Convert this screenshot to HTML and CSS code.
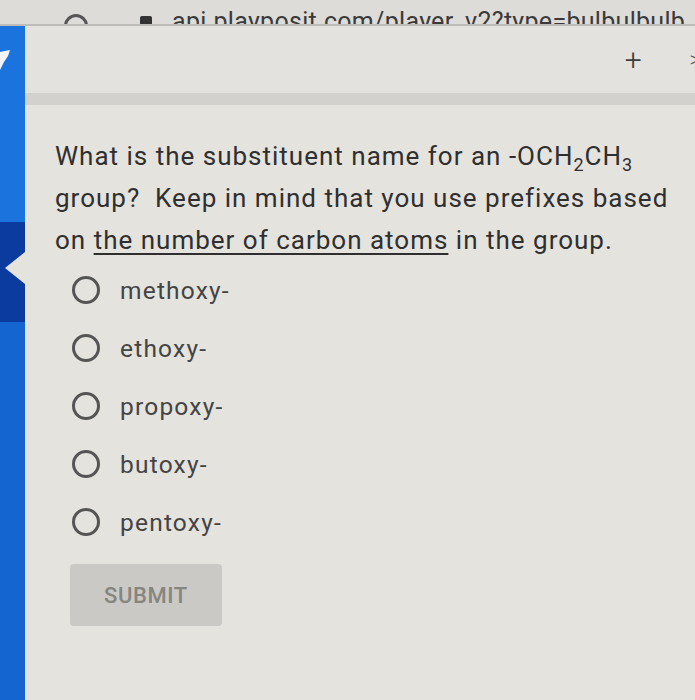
FILE: index.html
```html
<!DOCTYPE html>
<html lang="en">
<head>
    <meta charset="UTF-8">
    <title>PlayPosit question</title>
    <link rel="stylesheet" href="styles.css">
</head>
<body>
    <!-- browser address bar, cut off by the photo -->
    <div class="urlbar">
        <span class="reload"></span>
        <span class="lock"></span>
        <span class="url">api.playposit.com/player_v2?type=bulbulbulb</span>
    </div>

    <div class="app">
        <div class="rail">
            <div class="rail-top">
                <svg class="logo" width="12" height="24" viewBox="0 0 12 24">
                    <path d="M0 4 L10 2 L8 8 L4 14 L0 22 Z" fill="#f2f4f8"/>
                </svg>
            </div>
            <div class="rail-mark"></div>
            <div class="rail-bottom"></div>
        </div>

        <div class="main">
            <div class="topbar">
                <span class="plus">+</span>
                <span class="next">&gt;</span>
            </div>
            <div class="strip"></div>

            <div class="content">
                <p class="question">
                    What is the substituent name for an -OCH<sub>2</sub>CH<sub>3</sub><br>
                    group?&nbsp; Keep in mind that you use prefixes based<br>
                    on <u>the number of carbon atoms</u> in the group.
                </p>

                <div class="options">
                    <label class="option"><span class="radio"></span>methoxy-</label>
                    <label class="option"><span class="radio"></span>ethoxy-</label>
                    <label class="option"><span class="radio"></span>propoxy-</label>
                    <label class="option"><span class="radio"></span>butoxy-</label>
                    <label class="option"><span class="radio"></span>pentoxy-</label>
                </div>

                <button class="submit-btn" disabled>SUBMIT</button>
            </div>
        </div>
    </div>
</body>
</html>
```

FILE: styles.css
```css
body {
    margin: 0;
    width: 695px;
    height: 700px;
    overflow: hidden;
    font-family: Roboto, "Noto Sans", sans-serif;
    background-color: #e5e3de;
}
.urlbar {
    height: 26px;
    box-sizing: border-box;
    border-bottom: 2px solid #bdbcb8;
    background-color: #dddcd8;
    display: flex;
    align-items: flex-end;
    overflow: hidden;
    color: #3a3a3a;
}
.reload {
    width: 18px;
    height: 18px;
    border: 3px solid #555;
    border-radius: 50%;
    margin: 0 0 -14px 64px;
    flex-shrink: 0;
}
.lock {
    width: 12px;
    height: 14px;
    background-color: #333;
    border-radius: 2px;
    margin: 0 0 -6px 52px;
    flex-shrink: 0;
}
.url {
    font-size: 25px;
    letter-spacing: 0.3px;
    margin: 0 0 -13px 20px;
    white-space: nowrap;
    line-height: 30px;
}
.app {
    display: flex;
    height: 674px;
}
.rail {
    width: 25px;
    display: flex;
    flex-direction: column;
    flex-shrink: 0;
}
.rail-top {
    height: 196px;
    background-color: #1b74dd;
}
.logo {
    display: block;
    margin-top: 22px;
}
.rail-mark {
    height: 100px;
    background-color: #0b3b9f;
    position: relative;
}
.rail-mark::after {
    content: "";
    position: absolute;
    right: 0;
    top: 30px;
    border-right: 20px solid #e5e3de;
    border-top: 16px solid transparent;
    border-bottom: 16px solid transparent;
}
.rail-bottom {
    flex: 1;
    background-color: #1465cf;
}
.main {
    flex: 1;
    min-width: 0;
}
.topbar {
    height: 67px;
    background-color: #e3e2de;
    display: flex;
    align-items: center;
    justify-content: flex-end;
    color: #3c3c3c;
    overflow: hidden;
}
.plus {
    font-size: 30px;
    font-weight: 300;
    margin-right: 48px;
}
.next {
    font-size: 22px;
    font-weight: 300;
    margin-right: -6px;
    color: #555;
}
.strip {
    height: 12px;
    background-color: #d2d1ce;
}
.content {
    padding: 30px 0 0 30px;
}
.question {
    margin: 0;
    font-size: 26px;
    letter-spacing: 1px;
    line-height: 42px;
    color: #2f2f2f;
    white-space: nowrap;
}
.question sub {
    font-size: 18px;
    line-height: 0;
}
.question u {
    text-decoration-thickness: 2px;
    text-underline-offset: 4px;
}
.options {
    display: flex;
    flex-direction: column;
}
.option {
    height: 58px;
    display: flex;
    align-items: center;
    font-size: 24.5px;
    letter-spacing: 1.2px;
    color: #444;
}
.radio {
    width: 22px;
    height: 22px;
    border: 3px solid #555;
    border-radius: 50%;
    margin: 0 20px 0 17px;
}
.submit-btn {
    margin: 13px 0 0 15px;
    width: 152px;
    height: 62px;
    border: none;
    border-radius: 4px;
    background-color: #cac9c5;
    color: #86857f;
    font-family: Roboto, sans-serif;
    font-size: 22px;
    letter-spacing: 0.6px;
    font-weight: 500;
}
```
